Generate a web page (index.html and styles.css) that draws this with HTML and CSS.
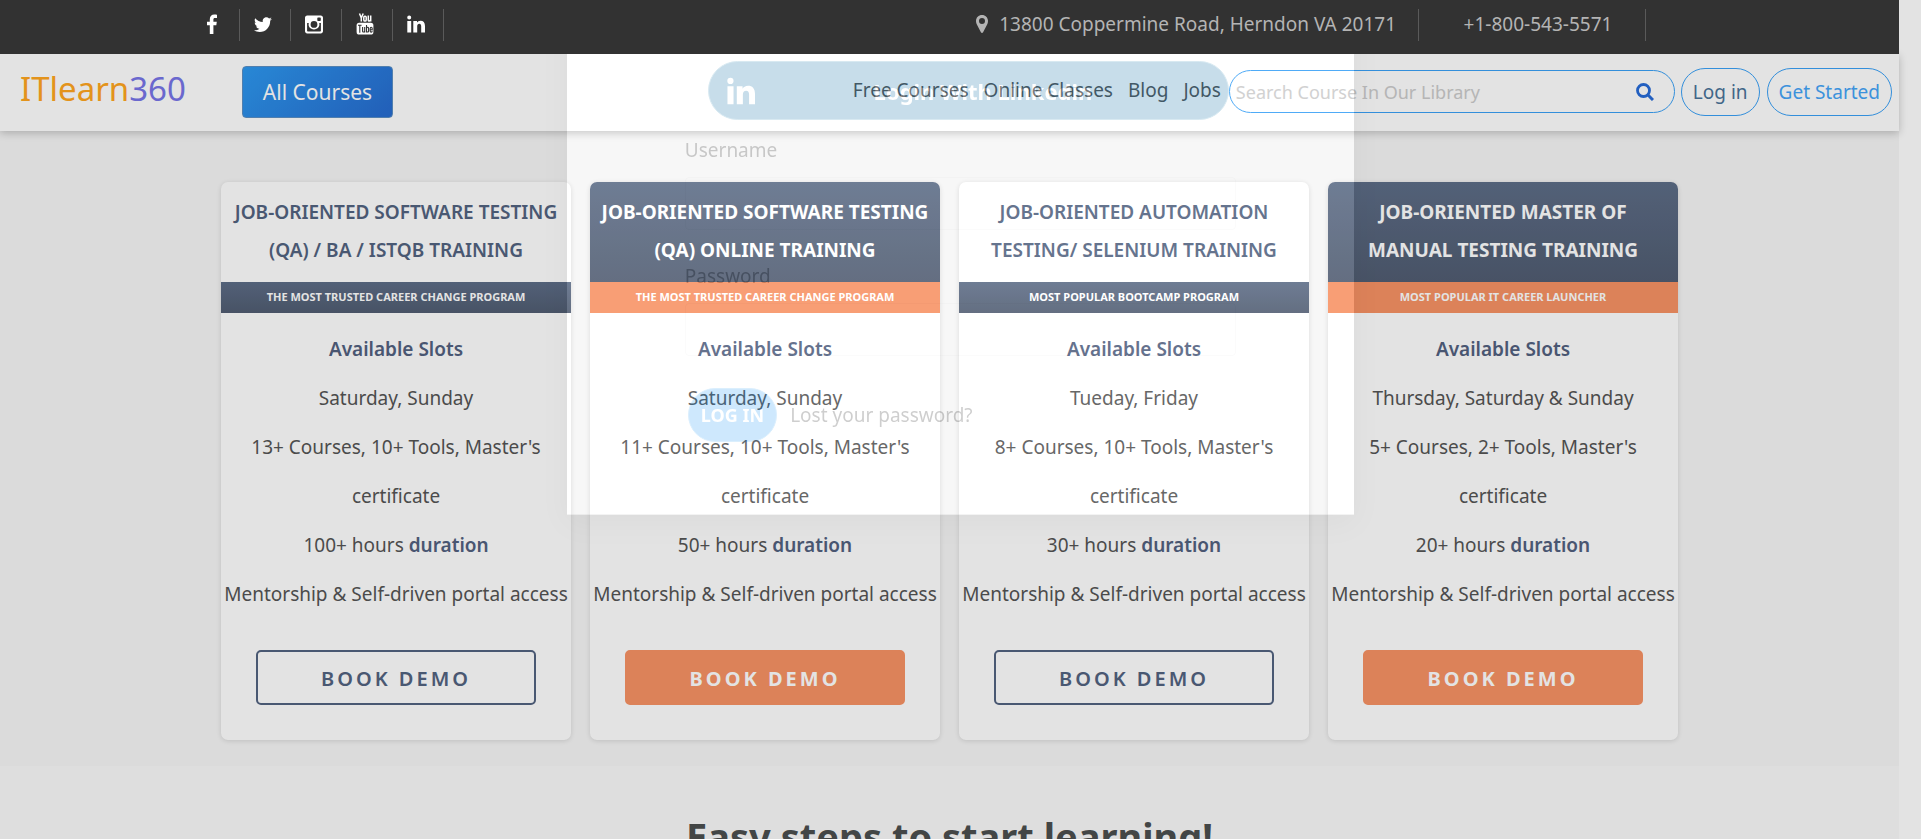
FILE: index.html
```
<!DOCTYPE html>
<html lang="en">
<head>
<meta charset="utf-8">
<title>ITlearn360</title>
<link rel="stylesheet" href="styles.css">
</head>
<body>
<div class="page">
  <div class="topbar">
    <ul class="social">
      <li><a href="#" aria-label="Facebook"><svg viewBox="0 0 18 20" width="18" height="20"><path fill="#fff" d="M14 .8v3.100h-1.900c-1.400 0-1.700.7-1.700 1.700v2.100h3.400l-.5 3.500h-2.900V20H6.800v-8.800H4V7.700h2.800V5.200C6.800 2.300 8.600.6 11.300.6c1.200 0 2.300.1 2.700.2z"/></svg></a></li>
      <li><a href="#" aria-label="Twitter"><svg viewBox="0 0 18 20" width="18" height="20"><path fill="#fff" d="M18 4.800c-.5.700-1.100 1.400-1.800 1.900C16.400 13 11.700 18 5.700 18 3.600 18 1.600 17.400 0 16.300c1.900.2 3.800-.3 5.400-1.500-1.600 0-2.900-1-3.400-2.500.5.1 1.100.1 1.600 0C1.900 12 .7 10.500.7 8.600c.5.300 1 .4 1.600.5C.7 8 .2 5.900 1.200 4.200 3 6.400 5.800 7.900 8.800 8c-.6-2.500 1.200-4.700 3.600-4.700 1 0 2 .4 2.700 1.200.8-.2 1.600-.5 2.300-.9-.3.800-.8 1.500-1.600 2 .8-.1 1.500-.3 2.200-.8z"/></svg></a></li>
      <li><a href="#" aria-label="Instagram"><svg viewBox="0 0 18 20" width="18" height="20"><path fill="#fff" fill-rule="evenodd" d="M2.200 1.500h13.600c1.200 0 2.200 1 2.200 2.200v13.600c0 1.200-1 2.200-2.200 2.200H2.200C1 19.500 0 18.500 0 17.300V3.700c0-1.200 1-2.200 2.200-2.200zM13 3.600c-.4 0-.7.3-.7.700v2c0 .4.3.7.7.7h2.100c.4 0 .7-.3.700-.7v-2c0-.4-.3-.7-.7-.7zM2.100 9.100v7.600c0 .4.3.7.7.7h12.400c.4 0 .7-.3.700-.7V9.100h-1.700c1 3.300-1.500 6.400-5.200 6.400s-6.200-3.100-5.200-6.400zM9 7a3.400 3.400 0 1 0 0 6.800A3.400 3.400 0 0 0 9 7z"/></svg></a></li>
      <li><a href="#" aria-label="YouTube"><svg viewBox="0 0 18 22" width="18" height="22"><g fill="none" stroke="#fff" stroke-width="1.500"><path d="M3.500.5 5.300 5v3.600M7.200.5 5.300 5"/><rect x="7.800" y="3.200" width="2.400" height="4.800" rx="1.100"/><path d="M12.300 2.600v4.600c0 1.200 1.600.9 2.300-.2M14.700 2.600v6"/></g><rect x=".6" y="9.800" width="16.800" height="11.800" rx="2.600" fill="#fff"/><path fill="none" stroke="#323232" stroke-width="1.100" d="M2 12.200h3.600M3.800 12.200v7.500M6.600 14v4.300c0 1.200 1.400.8 2-.1M8.700 14v5.500M10.500 12v7.400M10.500 15c.8-1.100 2.100-.8 2.100.5v2.400c0 1.300-1.300 1.500-2.100.4M14.200 16.700h2v-1.200c0-1.600-2-1.600-2 0v2.400c0 1.700 2 1.600 2-.2"/></svg></a></li>
      <li><a href="#" aria-label="LinkedIn"><svg viewBox="0 0 18 20" width="18" height="20"><path fill="#fff" d="M.3 7h3.900v11.500H.3zM2.200 1.500a2 2 0 1 1 0 4 2 2 0 0 1 0-4zM6.300 7H10v1.600c.6-1 1.800-1.900 3.600-1.900 2.600 0 4.400 1.700 4.400 5.200v6.600h-3.800v-6.200c0-1.500-.6-2.500-1.900-2.500-1.400 0-2.100 1-2.100 2.600v6.100H6.300z"/></svg></a></li>
    </ul>
    <ul class="contact">
      <li><svg viewBox="0 0 12 18" width="12" height="18"><path fill="#b4b4b4" fill-rule="evenodd" d="M6 0c3.400 0 6 2.600 6 6 0 1.200-.2 2-.6 2.900L7.100 17.300c-.5.900-1.700.9-2.200 0L.6 8.900C.2 8 0 7.200 0 6c0-3.400 2.600-6 6-6zm0 3a3 3 0 1 0 0 6 3 3 0 0 0 0-6z"/></svg>13800 Coppermine Road, Herndon VA 20171</li>
      <li class="phone">+1-800-543-5571</li>
    </ul>
  </div>

  <header class="header">
    <a class="logo" href="#">ITlearn<span class="logo-num">360</span></a>
    <button class="all-courses" type="button">All Courses</button>
    <nav class="nav">
      <a href="#">Free Courses</a>
      <a href="#">Online Classes</a>
      <a href="#">Blog</a>
      <a href="#">Jobs</a>
    </nav>
    <form class="search">
      <input type="search" aria-label="Search courses" placeholder="Search Course In Our Library">
      <button type="button" aria-label="Search"><svg viewBox="0 0 18 18" width="18" height="18"><circle cx="7.500" cy="7.500" r="6" fill="none" stroke="#276bd8" stroke-width="2.800"/><path d="m12 12 5 5" stroke="#276bd8" stroke-width="3"/></svg></button>
    </form>
    <a class="pill pill-login" href="#">Log in</a>
    <a class="pill" href="#">Get Started</a>
  </header>

  <main>
    <section class="plans">
      <article class="card">
        <h2 class="card-title">JOB-ORIENTED SOFTWARE TESTING (QA) / BA / ISTQB TRAINING</h2>
        <p class="ribbon">THE MOST TRUSTED CAREER CHANGE PROGRAM</p>
        <div class="card-body">
          <p><strong>Available Slots</strong></p>
          <p>Saturday, Sunday</p>
          <p>13+ Courses, 10+ Tools, Master's certificate</p>
          <p>100+ hours <strong>duration</strong></p>
          <p>Mentorship &amp; Self-driven portal access</p>
        </div>
        <button class="book" type="button">BOOK DEMO</button>
      </article>
      <article class="card card-featured">
        <h2 class="card-title">JOB-ORIENTED SOFTWARE TESTING (QA) ONLINE TRAINING</h2>
        <p class="ribbon">THE MOST TRUSTED CAREER CHANGE PROGRAM</p>
        <div class="card-body">
          <p><strong>Available Slots</strong></p>
          <p>Saturday, Sunday</p>
          <p>11+ Courses, 10+ Tools, Master's certificate</p>
          <p>50+ hours <strong>duration</strong></p>
          <p>Mentorship &amp; Self-driven portal access</p>
        </div>
        <button class="book" type="button">BOOK DEMO</button>
      </article>
      <article class="card">
        <h2 class="card-title">JOB-ORIENTED AUTOMATION TESTING/ SELENIUM TRAINING</h2>
        <p class="ribbon">MOST POPULAR BOOTCAMP PROGRAM</p>
        <div class="card-body">
          <p><strong>Available Slots</strong></p>
          <p>Tueday, Friday</p>
          <p>8+ Courses, 10+ Tools, Master's certificate</p>
          <p>30+ hours <strong>duration</strong></p>
          <p>Mentorship &amp; Self-driven portal access</p>
        </div>
        <button class="book" type="button">BOOK DEMO</button>
      </article>
      <article class="card card-featured">
        <h2 class="card-title">JOB-ORIENTED MASTER OF MANUAL TESTING TRAINING</h2>
        <p class="ribbon">MOST POPULAR IT CAREER LAUNCHER</p>
        <div class="card-body">
          <p><strong>Available Slots</strong></p>
          <p>Thursday, Saturday &amp; Sunday</p>
          <p>5+ Courses, 2+ Tools, Master's certificate</p>
          <p>20+ hours <strong>duration</strong></p>
          <p>Mentorship &amp; Self-driven portal access</p>
        </div>
        <button class="book" type="button">BOOK DEMO</button>
      </article>
    </section>
    <section class="steps">
      <h2 class="steps-title">Easy steps to start learning!</h2>
    </section>
  </main>
</div>

<div class="overlay">
  <form class="modal">
    <button class="linkedin" type="button"><svg viewBox="0 0 18 18" width="28" height="28"><path fill="#fff" d="M.3 6h3.900v11.500H.3zM2.200.5a2 2 0 1 1 0 4 2 2 0 0 1 0-4zM6.300 6H10v1.600c.6-1 1.800-1.900 3.600-1.900 2.600 0 4.400 1.700 4.400 5.200v6.600h-3.800v-6.200c0-1.500-.6-2.500-1.900-2.500-1.400 0-2.100 1-2.100 2.600v6.100H6.300z"/></svg><span>Login With Linkedin</span></button>
    <div class="fields">
      <label for="user">Username</label>
      <input id="user" type="text">
      <label for="pass">Password</label>
      <input id="pass" type="password">
      <div class="actions">
        <button class="submit" type="button">LOG IN</button>
        <a href="#">Lost your password?</a>
      </div>
    </div>
  </form>
</div>
</body>
</html>
```
FILE: styles.css
```
* { box-sizing: border-box; }

html { background: #fff; }

body {
  margin: 0;
  height: 100vh;
  overflow: hidden;
  font: 19px/28px "Noto Sans", "Open Sans", sans-serif;
  color: #555;
}

h2, p, ul { margin: 0; padding: 0; }
a { color: inherit; text-decoration: none; }
button, input { font: inherit; color: inherit; margin: 0; }
button { cursor: pointer; }
svg { display: block; flex: none; }

.page { margin-right: 22px; }

/* Top bar */
.topbar {
  position: relative;
  z-index: 30;
  display: flex;
  justify-content: space-between;
  align-items: flex-start;
  height: 54px;
  padding: 9px 253px 0 189px;
  background: #323232;
  color: #b4b4b4;
}
.social, .contact { display: flex; list-style: none; }
.social li {
  display: flex;
  align-items: center;
  width: 51px;
  height: 32px;
  padding: 0 0 3px 14px;
  border-right: 1px solid #5a5a5a;
}
.contact li {
  display: flex;
  align-items: center;
  gap: 11px;
  height: 32px;
  padding: 0 22px 3px 0;
  border-right: 1px solid #5a5a5a;
}
.contact .phone {
  justify-content: center;
  min-width: 227px;
  padding-left: 34px;
}

/* Header */
.header {
  position: relative;
  z-index: 10;
  display: flex;
  align-items: center;
  height: 77px;
  padding: 0 7px 2px 20px;
  background: #fff;
  box-shadow: 0 2px 8px rgba(0, 0, 0, .22);
}
.logo {
  margin: 0 56px 6px 0;
  font-size: 33px;
  line-height: 40px;
  color: #ffa620;
}
.logo-num { color: #7875e8; }
.all-courses {
  height: 52px;
  padding: 0 20px;
  border: 1px solid #5b8fc4;
  border-radius: 4px;
  background: linear-gradient(135deg, #2d99f0, #276bcf);
  color: #fff;
  font-size: 21px;
}
.nav {
  display: flex;
  gap: 15px;
  margin: 0 8px 4px auto;
  color: #555;
}
.search {
  display: flex;
  align-items: center;
  justify-content: space-between;
  width: 446px;
  height: 43px;
  margin-right: 6px;
  padding: 0 20px 0 6px;
  border: 1px solid #3aa1f7;
  border-radius: 22px;
}
.search input {
  flex: 1;
  min-width: 0;
  padding: 0;
  border: 0;
  outline: 0;
  background: none;
  font-size: 18px;
}
.search input::placeholder { color: #ccc; opacity: 1; }
.search button { padding: 0; border: 0; background: none; }
.pill {
  height: 48px;
  padding: 9px 11px;
  border: 1px solid #3aa1f7;
  border-radius: 24px;
  color: #44a4f8;
  white-space: nowrap;
}
.pill-login { margin-right: 7px; color: #4a7399; }

/* Plans */
.plans {
  display: grid;
  grid-template-columns: repeat(4, 1fr);
  gap: 19px;
  padding: 51px 221px 26px;
  background: #f6f6f6;
}
.card {
  overflow: hidden;
  padding-bottom: 35px;
  border-radius: 7px;
  background: #fff;
  box-shadow: 0 1px 5px rgba(0, 0, 0, .12);
  text-align: center;
}
.card-title {
  padding: 11px 10px 13px;
  font-size: 19px;
  line-height: 38px;
  font-weight: 600;
  color: #536380;
}
.ribbon {
  padding-bottom: 2px;
  background: linear-gradient(#5d6d87, #515d72);
  color: #fff;
  font-size: 11px;
  font-weight: 700;
  line-height: 29px;
}
.card-featured .card-title {
  background: linear-gradient(#5d6d87, #515d72);
  color: #fff;
  font-weight: 700;
}
.card-featured .ribbon { background: #f89264; }
.card-body {
  padding: 12px 0 31px;
  line-height: 49px;
}
.card-body strong { color: #52617f; font-weight: 600; }
.book {
  width: 80%;
  height: 55px;
  padding: 2px 0 0;
  border: 2px solid #536380;
  border-radius: 5px;
  background: none;
  color: #536380;
  font-size: 20px;
  font-weight: 600;
  letter-spacing: 3px;
}
.card-featured .book {
  border-color: #f89264;
  background: #f89264;
  color: #fff;
  font-weight: 700;
}

/* Steps */
.steps {
  padding: 44px 0;
  background: #fafafa;
  text-align: center;
}
.steps-title {
  font-size: 38px;
  line-height: 52px;
  font-weight: 700;
  color: #4c4f4f;
}

/* Login dialog, part-way through its fade-in */
.overlay {
  position: fixed;
  inset: 0;
  z-index: 20;
  display: flex;
  justify-content: center;
  align-items: flex-start;
  overflow: hidden;
  opacity: .22;
}
.modal {
  width: 41%;
  padding: 61px 0 72px;
  border-bottom: 1px solid rgba(0, 0, 0, .2);
  background: rgba(255, 255, 255, .5);
  box-shadow: 0 8px 28px rgba(0, 0, 0, .3), 0 0 0 9999px rgba(0, 0, 0, .5);
  color: #222;
}
.linkedin {
  display: flex;
  align-items: center;
  width: 521px;
  max-width: 100%;
  height: 59px;
  margin: 0 0 16px 18%;
  padding: 0 18px;
  border: 1px solid #4f9cc0;
  border-radius: 30px;
  background: #0065a0;
  color: #fff;
  font-size: 22px;
  font-weight: 700;
}
.linkedin span { flex: 1; }
.fields {
  width: 70%;
  margin: 0 auto;
}
.fields label { display: block; }
.fields input {
  display: block;
  width: 100%;
  height: 53px;
  margin: 13px 0 32px;
  border: 1px solid rgba(0, 0, 0, .08);
  border-radius: 4px;
  background: none;
}
.actions {
  display: flex;
  align-items: center;
  gap: 13px;
  padding-left: 3px;
}
.submit {
  height: 54px;
  padding: 0 12px;
  border: 1px solid #5bb4f5;
  border-radius: 27px;
  background: #2196f3;
  color: #fff;
  font-size: 18px;
  font-weight: 700;
}
```
